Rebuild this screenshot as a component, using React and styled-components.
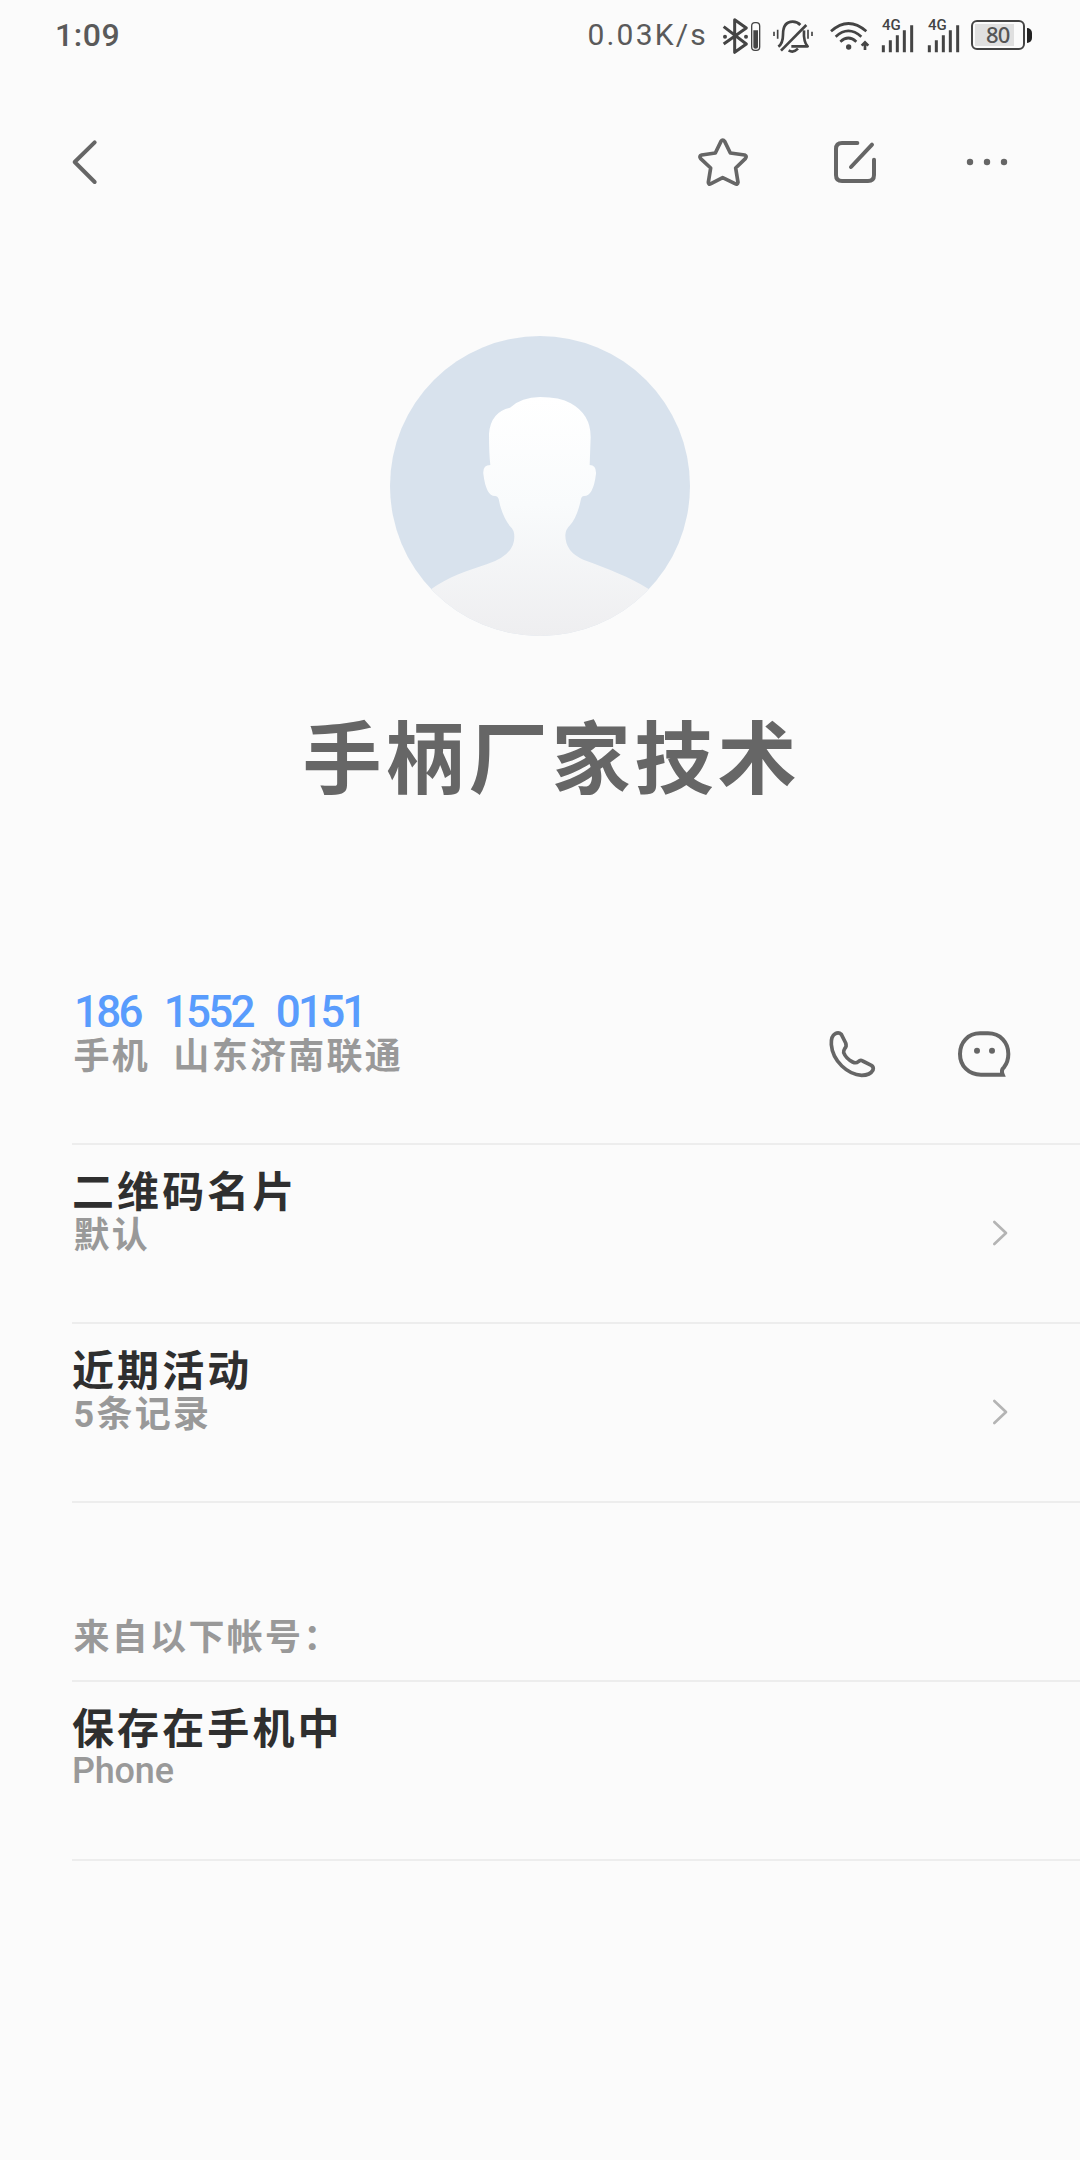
import React from 'react';
import styled, { createGlobalStyle } from 'styled-components';

const GlobalStyle = createGlobalStyle`
  *, *::before, *::after { box-sizing: border-box; }
  body {
    margin: 0;
    background: #fbfbfb;
    font-family: Roboto, "Noto Sans CJK SC", sans-serif;
  }
  svg { display: block; flex: none; }
`;

const Screen = styled.div`
  width: 1080px;
  height: 2160px;
  background: #fbfbfb;
  display: flex;
  flex-direction: column;
  overflow: hidden;
`;

const StatusBar = styled.header`
  height: 70px;
  padding: 0 48px 0 55px;
  display: flex;
  justify-content: space-between;
  align-items: center;
  color: #5a5a5a;
  line-height: 70px;
`;

const Clock = styled.span`
  font-size: 32px;
  font-weight: 500;
  letter-spacing: 0.6px;
`;

const StatusGroup = styled.div`
  height: 70px;
  display: flex;
  align-items: center;
`;

const Speed = styled.span`
  font-size: 30px;
  letter-spacing: 2.2px;
  margin-right: 12px;
`;

const StatusIcon = styled.svg`
  margin-right: ${(p) => p.$gap}px;
`;

const Battery = styled.div`
  display: flex;
  align-items: center;
  gap: 2px;
`;

const BatteryBody = styled.div`
  width: 54px;
  height: 30px;
  padding: 2px;
  border: 2px solid #444;
  border-radius: 6px;
`;

const BatteryLevel = styled.div`
  width: 39px;
  height: 22px;
  padding-left: 11px;
  background: #e0e0e0;
  color: #555;
  font: 500 22px/21px "Noto Sans", sans-serif;
  letter-spacing: -0.8px;
`;

const BatteryTip = styled.div`
  width: 5px;
  height: 15px;
  border-radius: 0 5px 5px 0;
  background: #222;
`;

const Toolbar = styled.nav`
  height: 184px;
  padding: 0 72px 0 70px;
  display: flex;
  align-items: center;
  justify-content: space-between;
`;

const ToolbarActions = styled.div`
  display: flex;
  align-items: center;
  gap: ${(p) => p.$gap}px;
`;

const Profile = styled.section`
  height: 712px;
  padding-top: 82px;
  display: flex;
  flex-direction: column;
  align-items: center;
`;

const Name = styled.h1`
  margin: 65px 0 0;
  padding-left: 23px;
  font-size: 79px;
  line-height: 120px;
  font-weight: 700;
  letter-spacing: 4px;
  color: #666;
`;

const Row = styled.section`
  height: 179px;
  margin-left: 72px;
  padding: 0 ${(p) => p.$right || 70}px 1px 0;
  border-bottom: 2px solid #ededed;
  display: flex;
  align-items: center;
  justify-content: space-between;
`;

const RowText = styled.div`
  align-self: flex-start;
  padding-top: 25px;
`;

const Title = styled.div`
  font-size: 42px;
  line-height: 46px;
  font-weight: 700;
  letter-spacing: 3.1px;
  color: #2f2f2f;
`;

const PhoneNumber = styled(Title)`
  margin: -2px 0 2px;
  padding-left: 2px;
  font-size: 44px;
  font-weight: 500;
  letter-spacing: -2.8px;
  word-spacing: 15px;
  color: #599cfd;
`;

const Subtitle = styled.div`
  padding-left: ${(p) => (p.$latin ? 0 : 1.5)}px;
  font-size: 36px;
  line-height: ${(p) => (p.$latin ? 37 : 40)}px;
  font-weight: ${(p) => (p.$latin ? 500 : 700)};
  letter-spacing: ${(p) => (p.$latin ? -0.2 : 2.3)}px;
  word-spacing: 12px;
  color: #999;
`;

const SectionLabel = styled(Subtitle)`
  height: 179px;
  margin-left: 72px;
  padding-top: 115px;
  border-bottom: 2px solid #ededed;
`;

const Bluetooth = () => (
  <StatusIcon $gap={9} width="42" height="39" viewBox="480 48 126 117" fill="none" stroke="#444">
    <path d="M491 80 L559 132 L524 157 V59 L559 84 L491 132" strokeWidth="9" strokeLinejoin="round" />
    <circle cx="495" cy="110" r="6" fill="#444" stroke="none" />
    <circle cx="558" cy="110" r="6" fill="#444" stroke="none" />
    <rect x="575" y="68" width="24" height="83" rx="10" strokeWidth="4" />
    <path d="M580 91 H594 V141 Q594 146 587 146 Q580 146 580 141 Z" fill="#444" stroke="none" />
  </StatusIcon>
);

const MutedBell = () => (
  <StatusIcon $gap={13} width="44" height="39" viewBox="633 48 132 117" fill="none" stroke="#444">
    <path d="M655 140 Q669 130 669 104 Q669 65 698 65 Q712 65 721 75 M732 91 Q730 126 743 139 H694" strokeWidth="8" strokeLinejoin="round" />
    <path d="M663 152 L739 75" strokeWidth="8" />
    <path d="M686 151 Q700 160 714 146" strokeWidth="8" />
    <path d="M642 95 V108 M653 89 V116 M744 89 V116 M756 95 V108" strokeWidth="5" />
  </StatusIcon>
);

const Wifi = () => (
  <StatusIcon $gap={11} width="42" height="33" viewBox="84 57 126 99" fill="none" stroke="#444">
    <path d="M93 94 Q145 47 199 94 M107 110 Q145 75 184 110 M121 125 Q145 103 169 125" strokeWidth="8" />
    <circle cx="146" cy="141" r="8" fill="#444" stroke="none" />
    <path d="M195 150 V130 M185 137 L195 127 L205 137" strokeWidth="8" />
  </StatusIcon>
);

const SignalText = styled.text`
  font: 500 45px Roboto, sans-serif;
  fill: #444;
`;

const Signal = ({ gap }) => (
  <StatusIcon $gap={gap} width="34" height="36" viewBox="243 50 102 108">
    <SignalText x="246" y="89">4G</SignalText>
    <path d="M250 135 V156 M271 120 V156 M292 105 V156 M313 90 V156 M335 75 V156" stroke="#444" strokeWidth="9" />
  </StatusIcon>
);

const BackIcon = () => (
  <svg width="30" height="50" viewBox="210 410 90 150" fill="none" stroke="#666" strokeWidth="12" strokeLinecap="round" strokeLinejoin="round">
    <path d="M284 426 L224 485 L284 545" />
  </svg>
);

const StarIcon = () => (
  <svg width="54" height="52" viewBox="108 78 162 156" fill="none" stroke="#666" strokeWidth="11" strokeLinejoin="round">
    <path d="M183 94 Q188 86 194 94 L211 129 L254 135 Q262 138 256 146 L227 174 L234 217 Q233 225 225 221 L188 203 L153 221 Q145 225 145 217 L152 174 L122 146 Q116 138 125 135 L166 129 Z" />
  </svg>
);

const EditIcon = () => (
  <svg width="46" height="46" viewBox="516 87 138 138" fill="none" stroke="#666" strokeWidth="12" strokeLinecap="round">
    <path d="M592 99 H546 Q528 99 528 117 V195 Q528 213 546 213 H624 Q642 213 642 195 V149 M573 171 L636 104" />
  </svg>
);

const MoreDots = styled.svg`
  margin-left: 6px;
`;

const MoreIcon = () => (
  <MoreDots width="42" height="12" viewBox="0 0 42 12" fill="#666">
    <circle cx="4" cy="6" r="3.2" />
    <circle cx="21" cy="6" r="3.2" />
    <circle cx="38" cy="6" r="3.2" />
  </MoreDots>
);

const Avatar = () => (
  <svg width="300" height="300" viewBox="30 47 900 900">
    <defs>
      <linearGradient id="body" gradientUnits="userSpaceOnUse" x1="0" y1="230" x2="0" y2="947">
        <stop offset="0" stopColor="#ffffff" />
        <stop offset="0.45" stopColor="#f9fbfc" />
        <stop offset="1" stopColor="#eeeef0" />
      </linearGradient>
      <clipPath id="disc">
        <circle cx="480" cy="497" r="450" />
      </clipPath>
    </defs>
    <circle cx="480" cy="497" r="450" fill="#d8e2ed" />
    <path
      clipPath="url(#disc)"
      fill="url(#body)"
      d="M390 262 Q425 230 480 230 Q540 230 572 249 Q632 282 632 350 L629 434 Q649 434 648 460 Q640 527 612 527 Q605 527 603 536 Q592 590 570 615 Q556 628 556 645 Q556 695 610 718 C690 748 745 768 806 806 L960 960 H0 L154 806 C205 770 260 752 320 732 Q403 705 403 650 Q403 628 390 618 Q365 585 356 536 Q353 527 345 527 Q318 527 310 460 Q308 434 331 434 Q327 400 327 340 Q332 275 390 262Z"
    />
  </svg>
);

const PhoneIcon = () => (
  <svg width="50" height="50" viewBox="141 117 150 150" fill="none" stroke="#666" strokeWidth="11" strokeLinejoin="round">
    <path d="M184 133 Q176 125 166 131 C155 137 153 149 154 164 C158 214 204 254 245 256 C261 256 273 251 279 240 Q282 231 274 226 L248 213 Q241 209 235 215 Q228 221 218 216 Q198 206 191 188 Q190 182 194 176 Q201 169 197 159 Z" />
  </svg>
);

const MessageIcon = () => (
  <svg width="57" height="50" viewBox="525 118 171 150" fill="none" stroke="#666" strokeWidth="12">
    <path d="M600 131 H624 C661 131 685 158 685 193 Q685 216 672 233 Q662 242 668 255 H603 C565 255 540 228 540 193 C540 158 564 131 600 131 Z" />
    <circle cx="591" cy="183" r="9" fill="#666" stroke="none" />
    <circle cx="636" cy="183" r="9" fill="#666" stroke="none" />
  </svg>
);

const Chevron = () => (
  <svg width="19" height="30" viewBox="633 684 57 90" fill="none" stroke="#b4b4b4" strokeWidth="8" strokeLinecap="round" strokeLinejoin="round">
    <path d="M643 696 L678 729 L643 762" />
  </svg>
);

const InfoRow = ({ title, detail, latin, link }) => (
  <Row>
    <RowText>
      <Title>{title}</Title>
      <Subtitle $latin={latin}>{detail}</Subtitle>
    </RowText>
    {link && <Chevron />}
  </Row>
);

export default function App() {
  return (
    <Screen>
      <GlobalStyle />
      <StatusBar>
        <Clock>1:09</Clock>
        <StatusGroup>
          <Speed>0.03K/s</Speed>
          <Bluetooth />
          <MutedBell />
          <Wifi />
          <Signal gap={12} />
          <Signal gap={10} />
          <Battery>
            <BatteryBody>
              <BatteryLevel>80</BatteryLevel>
            </BatteryBody>
            <BatteryTip />
          </Battery>
        </StatusGroup>
      </StatusBar>
      <Toolbar>
        <BackIcon />
        <ToolbarActions $gap={82}>
          <StarIcon />
          <EditIcon />
          <MoreIcon />
        </ToolbarActions>
      </Toolbar>
      <Profile>
        <Avatar />
        <Name>手柄厂家技术</Name>
      </Profile>
      <Row $right={68}>
        <RowText>
          <PhoneNumber>186 1552 0151</PhoneNumber>
          <Subtitle>手机 山东济南联通</Subtitle>
        </RowText>
        <ToolbarActions $gap={78}>
          <PhoneIcon />
          <MessageIcon />
        </ToolbarActions>
      </Row>
      <InfoRow title="二维码名片" detail="默认" link />
      <InfoRow title="近期活动" detail="5条记录" link />
      <SectionLabel>来自以下帐号：</SectionLabel>
      <InfoRow title="保存在手机中" detail="Phone" latin />
    </Screen>
  );
}
